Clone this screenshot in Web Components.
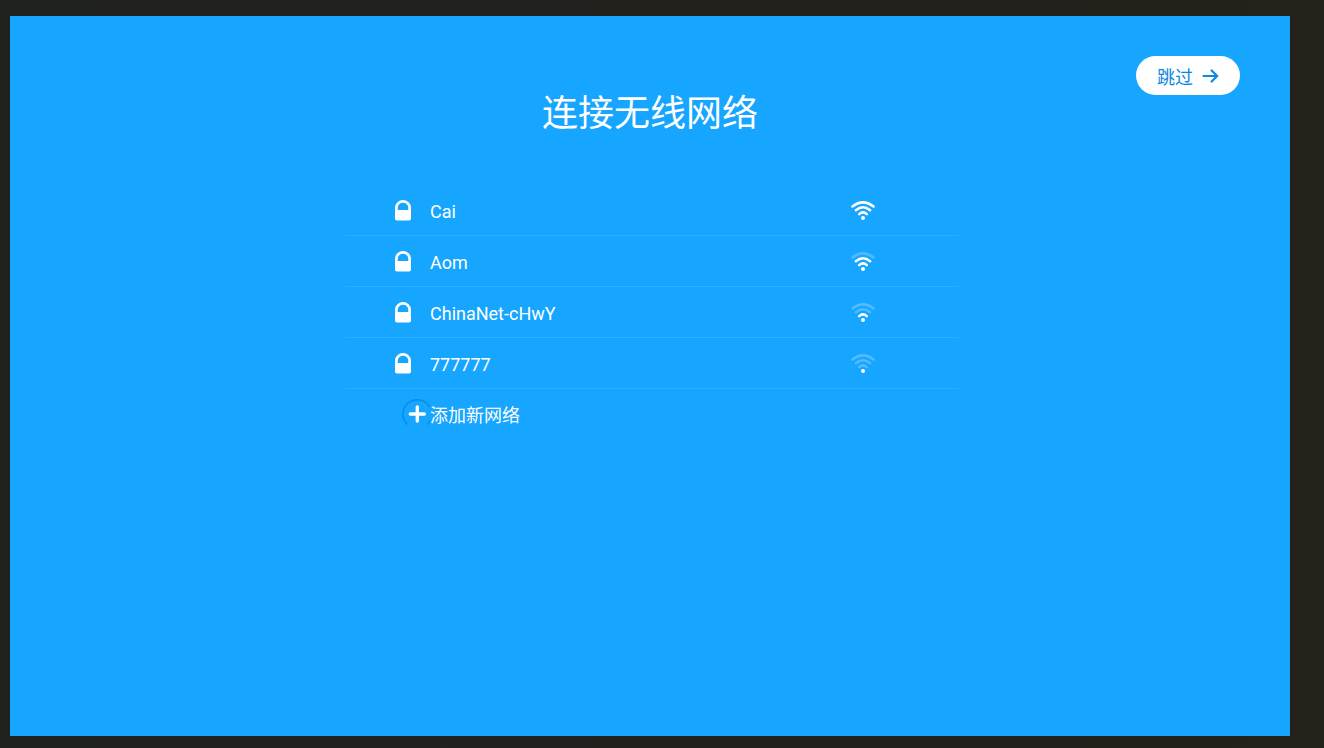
<!DOCTYPE html>
<html lang="zh-CN">
<head>
<meta charset="utf-8">
<title>连接无线网络</title>
<style>
  * { box-sizing: border-box; }

  body {
    background: linear-gradient(90deg, #20221f, #25211b);
    color: white;
    display: flex;
    font-family: Roboto, "Noto Sans CJK SC", sans-serif;
    margin: 0;
    min-height: 100vh;
    padding: 16px 34px 12px 10px;
  }
</style>
</head>
<body>
<wifi-setup>
  <skip-button slot="action">跳过</skip-button>
  <span slot="title">连接无线网络</span>
  <wifi-network level="3">Cai</wifi-network>
  <wifi-network level="2">Aom</wifi-network>
  <wifi-network level="1">ChinaNet-cHwY</wifi-network>
  <wifi-network level="0">777777</wifi-network>
  <add-network>添加新网络</add-network>
</wifi-setup>

<script>
// the blue screen: action on top, title, then the list of networks
class WifiSetup extends HTMLElement {
  constructor() {
    super();

    const shadowRoot = this.attachShadow({ mode: 'open' });
    shadowRoot.innerHTML = `
    <style>
    :host {
        background-color: #16a5ff;
        display: block;
        flex: 1;
    }

    header {
        display: flex;
        justify-content: flex-end;
        padding: 40px 50px 0;
    }

    h1 {
        font-size: 36px;
        font-weight: normal;
        line-height: 38px;
        margin: 0 0 52px;
        text-align: center;
    }

    .list {
        margin: 0 auto;
        max-width: 626px;
    }
    </style>
    <header><slot name="action"></slot></header>
    <h1><slot name="title"></slot></h1>
    <div class="list"><slot></slot></div>`;
  }
}

class SkipButton extends HTMLElement {
  constructor() {
    super();

    const shadowRoot = this.attachShadow({ mode: 'open' });
    shadowRoot.innerHTML = `
    <style>
    :host {
        display: block;
    }

    button {
        align-items: center;
        background-color: white;
        border: none;
        border-radius: 20px;
        color: #0b87e0;
        cursor: pointer;
        display: flex;
        font: inherit;
        font-size: 18px;
        gap: 9px;
        height: 39px;
        padding: 0 21px;
    }
    </style>
    <button type="button">
      <slot></slot>
      <svg width="17" height="14" viewBox="0 0 17 14" fill="none" stroke="currentColor" stroke-width="2.2" stroke-linecap="round" stroke-linejoin="round" aria-hidden="true">
        <path d="M1.5 7H15.2M9.6 1.5L15.2 7L9.6 12.5"/>
      </svg>
    </button>`;
  }
}

// both kinds of row share this
const rowStyle = `
    :host {
        display: block;
    }

    button {
        align-items: center;
        background: none;
        border: none;
        color: inherit;
        cursor: pointer;
        display: flex;
        font: inherit;
        font-size: 18px;
        height: 50px;
        text-align: left;
        width: 100%;
    }`;

class WifiNetwork extends HTMLElement {
  constructor() {
    super();

    const level = Number(this.getAttribute('level'));
    const arcs = [
      'M8.2 13.1Q12 9.7 15.8 13.1',
      'M4.9 9.3Q12 3.1 19.1 9.3',
      'M1.5 5.5Q12 -2.7 22.5 5.5'
    ];

    // arcs above the signal level are only faintly visible
    const paths = arcs.map((d, i) =>
      `<path d="${d}" opacity="${i < level ? 1 : 0.25}"/>`).join('');

    const shadowRoot = this.attachShadow({ mode: 'open' });
    shadowRoot.innerHTML = `
    <style>
    ${rowStyle}

    :host::after {
        background: linear-gradient(90deg, transparent, rgb(255,255,255,0.1) 2%, rgb(255,255,255,0.1) 98%, transparent);
        content: '';
        display: block;
        height: 1px;
    }

    button {
        gap: 19px;
        padding: 2px 88px 0 58px;
    }

    .name {
        flex: 1;
    }
    </style>
    <button type="button">
      <svg width="16" height="23" viewBox="0 0 16 23" aria-hidden="true">
        <path d="M1.4 11V7.6A6.6 6.2 0 0 1 14.6 7.6V11" fill="none" stroke="white" stroke-width="2.7"/>
        <path d="M0 10H16V18.5Q16 20.5 14 20.5H2Q0 20.5 0 18.5Z" fill="white"/>
      </svg>
      <span class="name"><slot></slot></span>
      <svg width="24" height="21" viewBox="0 0 24 21" fill="none" stroke="white" stroke-width="2.5" stroke-linecap="round" aria-hidden="true">
        ${paths}
        <circle cx="12" cy="17" r="2" fill="white" stroke="none"/>
      </svg>
    </button>`;
  }
}

class AddNetwork extends HTMLElement {
  constructor() {
    super();

    const shadowRoot = this.attachShadow({ mode: 'open' });
    shadowRoot.innerHTML = `
    <style>
    ${rowStyle}

    button {
        padding: 0 65px;
    }
    </style>
    <button type="button">
      <svg width="28" height="30" viewBox="0 0 28 30" fill="none" aria-hidden="true">
        <path d="M5.5 25.5A14.3 14.3 0 1 1 25 25.5" stroke="#078bec" stroke-width="1.4"/>
        <path d="M15.3 8V22M8.3 15H22.3" stroke="white" stroke-width="3.4" stroke-linecap="round"/>
      </svg>
      <slot></slot>
    </button>`;
  }
}

customElements.define('wifi-setup', WifiSetup);
customElements.define('skip-button', SkipButton);
customElements.define('wifi-network', WifiNetwork);
customElements.define('add-network', AddNetwork);
</script>
</body>
</html>
